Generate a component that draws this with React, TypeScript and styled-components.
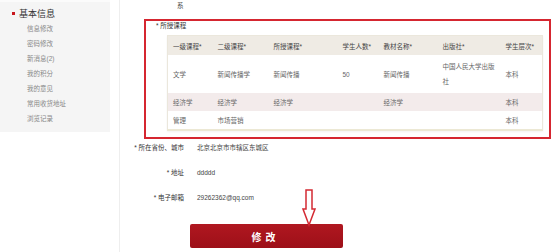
import React from 'react';
import styled, { createGlobalStyle } from 'styled-components';

const GlobalStyle = createGlobalStyle`
  html, body {
    margin: 0;
    padding: 0;
    background: #fff;
  }
  body {
    width: 554px;
    height: 252px;
    overflow: hidden;
    font-family: "Liberation Sans", "Noto Sans CJK SC", sans-serif;
  }
`;

// whole page: sidebar + main column
const Page = styled.div`
  display: flex;
  width: 554px;
  height: 252px;
  position: relative;
`;

const Sidebar = styled.div`
  width: 110px;
  height: 132px;
  background: #f5f5f5;
  border-top: 2px solid #fbfbfb;
  box-sizing: border-box;
  padding-top: 5px;
  margin-right: 9px;
`;

const SideTitle = styled.div`
  display: flex;
  align-items: center;
  padding-left: 12px;
  height: 12px;
  font-size: 9px;
  color: #333;
  margin-bottom: 2px;

  &::before {
    content: '';
    width: 3px;
    height: 3px;
    background: #c8161d;
    margin-right: 4px;
  }
`;

const SideItem = styled.div`
  padding-left: 27px;
  height: 15px;
  line-height: 15px;
  font-size: 6.5px;
  color: #888;
`;

const Main = styled.div`
  flex: 1;
  border-left: 1px solid #eeeeee;
  position: relative;
`;

const Overflow = styled.div`
  height: 19px;
  padding-left: 57px;
  font-size: 6.5px;
  line-height: 12px;
  color: #444;
`;

const RedBox = styled.div`
  margin-left: 24px;
  width: 407px;
  height: 120px;
  box-sizing: border-box;
  border: 2px solid #d52630;
  padding: 0 0 0 21px;
`;

const BoxTitle = styled.div`
  height: 14px;
  line-height: 10px;
  margin-left: -11px;
  font-size: 6.5px;
  color: #333;
`;

const Table = styled.table`
  width: 375px;
  table-layout: fixed;
  border-collapse: collapse;
  border: 1px solid #ebe7dc;
  border-bottom: 2px solid #ece8d4;
  box-shadow: 0 1px 2px rgba(0, 0, 0, 0.05);
  font-size: 6.5px;
`;

const Th = styled.th`
  background: #efebe4;
  color: #444;
  font-weight: normal;
  text-align: left;
  padding: 0 0 0 5px;
  height: 19px;
`;

const Tr = styled.tr<{ $shade?: boolean; $h: number }>`
  background: ${(p) => (p.$shade ? '#f3ebeb' : '#fff')};
  height: ${(p) => p.$h}px;
`;

const Td = styled.td`
  color: #666;
  padding: 0 0 0 5px;
  line-height: 15px;
  vertical-align: middle;
  word-break: break-all;
`;

const Form = styled.div`
  display: flex;
  flex-direction: column;
  gap: 9px;
`;

const FormRow = styled.div`
  display: flex;
  align-items: center;
  height: 16px;
  font-size: 6.5px;
`;

const Label = styled.div`
  width: 64px;
  text-align: right;
  color: #333;
  padding-right: 13px;
`;

const Value = styled.div`
  color: #444;
`;

const SubmitButton = styled.button`
  display: block;
  margin: 19px 0 0 70px;
  width: 153px;
  height: 24px;
  border: none;
  border-radius: 2px;
  background: linear-gradient(#b01720, #9d1018);
  color: #fff;
  font-family: "Noto Sans CJK SC", sans-serif;
  font-size: 10px;
  font-weight: bold;
  letter-spacing: 4px;
  padding-left: 4px;
`;

const Arrow = styled.svg`
  position: absolute;
  left: 182px;
  top: 189px;
`;

const headers = ['一级课程*', '二级课程*', '所授课程*', '学生人数*', '教材名称*', '出版社*', '学生层次*'];
const widths = [45, 56, 69, 41, 59, 63, 42];

const rows = [
  { h: 38, shade: false, cells: ['文学', '新闻传播学', '新闻传播', '50', '新闻传播', '中国人民大学出版社', '本科'] },
  { h: 18, shade: true, cells: ['经济学', '经济学', '经济学', '', '经济学', '', '本科'] },
  { h: 19, shade: false, cells: ['管理', '市场营销', '', '', '', '', '本科'] },
];

const menu = ['信息修改', '密码修改', '新消息(2)', '我的积分', '我的意见', '常用收货地址', '浏览记录'];

export default function App() {
  return (
    <>
      <GlobalStyle />
      <Page>
        <Sidebar>
          <SideTitle>基本信息</SideTitle>
          {menu.map((m) => (
            <SideItem key={m}>{m}</SideItem>
          ))}
        </Sidebar>
        <Main>
          <Overflow>系</Overflow>
          <RedBox>
            <BoxTitle>* 所授课程</BoxTitle>
            <Table>
              <colgroup>
                {widths.map((w, i) => (
                  <col key={i} style={{ width: w }} />
                ))}
              </colgroup>
              <thead>
                <tr>
                  {headers.map((h) => (
                    <Th key={h}>{h}</Th>
                  ))}
                </tr>
              </thead>
              <tbody>
                {rows.map((r, i) => (
                  <Tr key={i} $h={r.h} $shade={r.shade}>
                    {r.cells.map((c, j) => (
                      <Td key={j}>{c}</Td>
                    ))}
                  </Tr>
                ))}
              </tbody>
            </Table>
          </RedBox>
          <Form>
            <FormRow>
              <Label>* 所在省份、城市</Label>
              <Value>北京北京市市辖区东城区</Value>
            </FormRow>
            <FormRow>
              <Label>* 地址</Label>
              <Value>ddddd</Value>
            </FormRow>
            <FormRow>
              <Label>* 电子邮箱</Label>
              <Value>29262362@qq.com</Value>
            </FormRow>
          </Form>
          <SubmitButton type="button">修改</SubmitButton>
          <Arrow width="14" height="38" viewBox="0 0 14 38">
            <path
              d="M4 1 H10 V20 H13 L7 36 L1 20 H4 Z"
              fill="#fff"
              stroke="#d42a33"
              strokeWidth="1.5"
              strokeLinejoin="miter"
            />
          </Arrow>
        </Main>
      </Page>
    </>
  );
}
